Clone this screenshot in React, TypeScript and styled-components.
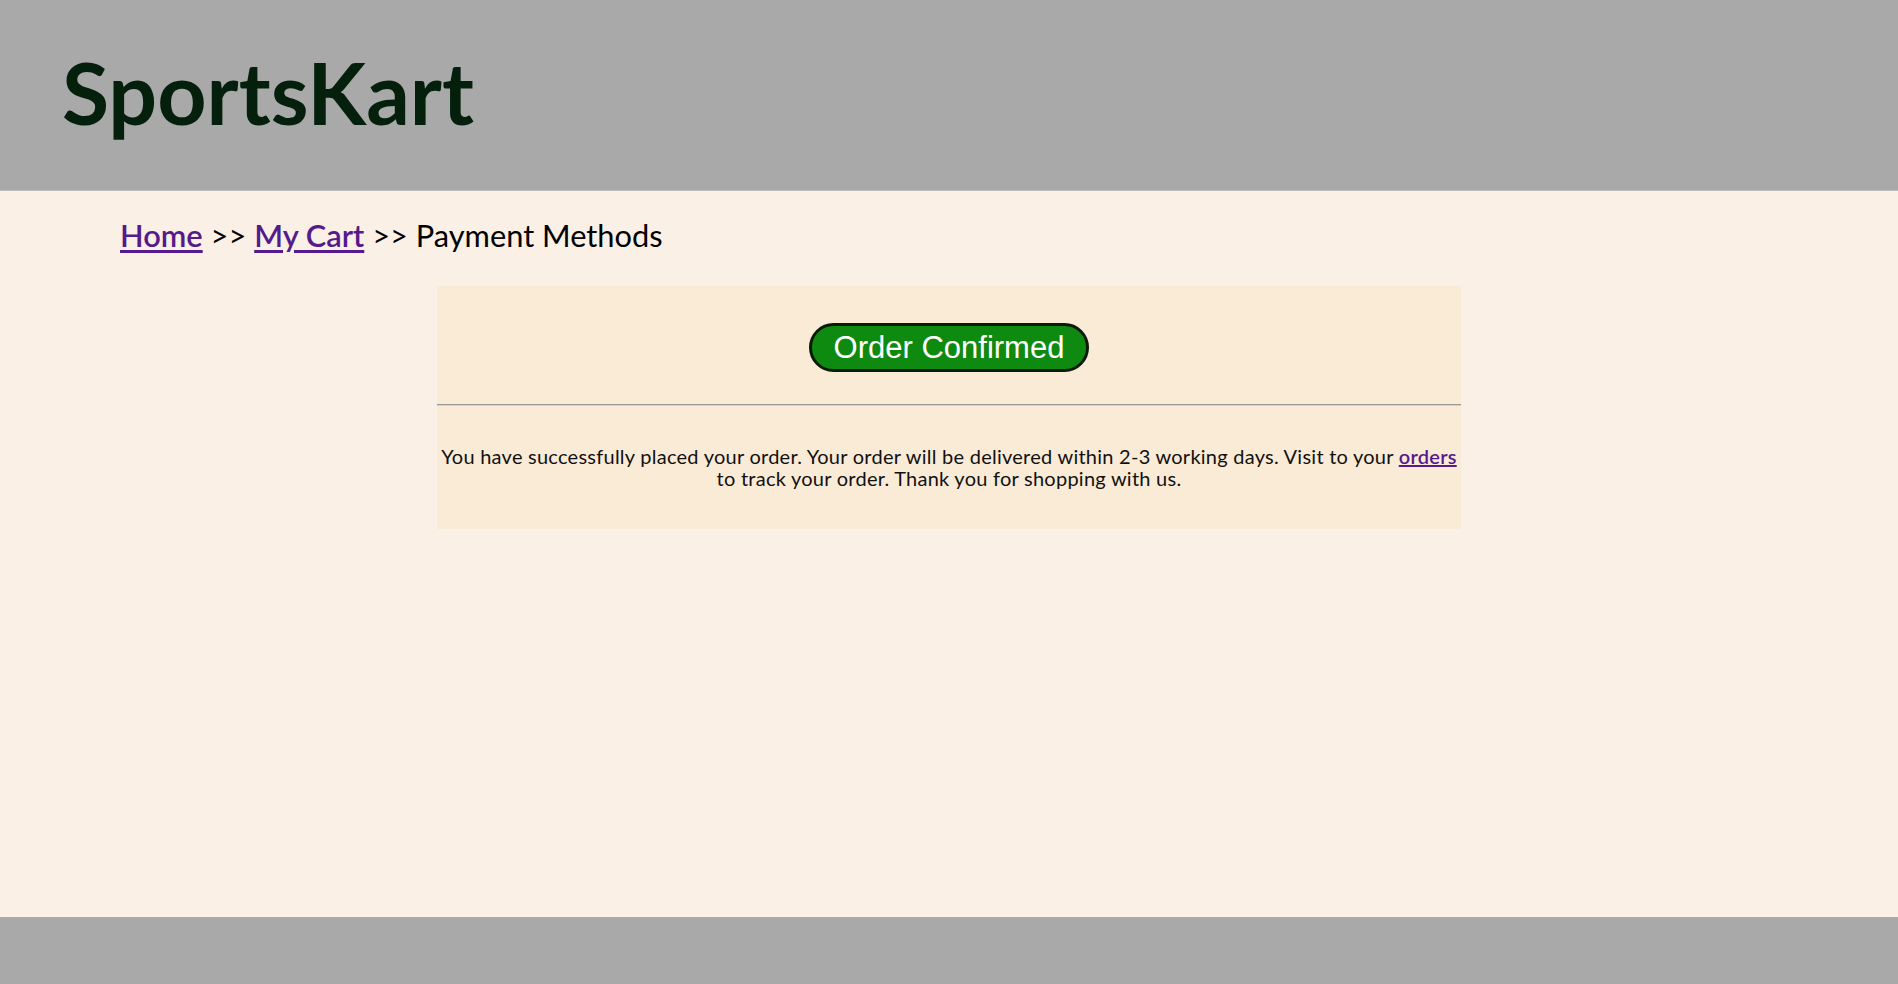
import React from "react";
import styled, { createGlobalStyle } from "styled-components";

const GlobalStyle = createGlobalStyle`
  html, body {
    margin: 0;
    padding: 0;
    background: #faf0e6;
  }
  body {
    font-family: Lato, "Open Sans", sans-serif;
  }
  * { box-sizing: border-box; }
`;

const Page = styled.div`
  display: flex;
  flex-direction: column;
  min-height: 100vh;
`;

const Header = styled.header`
  background: #a9a9a9;
  height: 191px;
  padding: 49px 0 0 62px;
  border-bottom: 1px solid #bdbdbd;
`;

const Brand = styled.h1`
  margin: 0;
  font-family: Lato, sans-serif;
  font-weight: 700;
  font-size: 86px;
  line-height: 86px;
  color: #041f0c;
`;

const Main = styled.main`
  flex: 1;
  background: #faf0e6;
  padding: 27px 0 0 0;
`;

const Crumbs = styled.nav`
  padding-left: 120px;
  font-family: Lato, sans-serif;
  font-size: 30.8px;
  line-height: 36px;
  color: #000;
`;

const CrumbLink = styled.a`
  color: #551a8b;
  text-decoration: underline;
  text-underline-offset: 3px;
  font-weight: 600;
`;

const Card = styled.section`
  width: 54%;
  margin: 32px auto 0;
  background: #faebd7;
  padding: 37px 0 40px;
  display: flex;
  flex-direction: column;
  align-items: center;
`;

const Badge = styled.div`
  height: 49px;
  width: 280px;
  border: 3px solid #0a1a08;
  border-radius: 25px;
  background: #0e8a10;
  color: #fff;
  font-family: "Liberation Sans", Arial, sans-serif;
  font-size: 31px;
  line-height: 43px;
  text-align: center;
`;

const Divider = styled.hr`
  align-self: stretch;
  margin: 32px 0 0;
  border: 0;
  border-top: 1px solid #9a9a9a;
  border-bottom: 1px solid #d8d0c4;
  height: 0;
`;

const Message = styled.p`
  margin: 39px 0 0;
  align-self: stretch;
  text-align: center;
  font-family: Lato, sans-serif;
  font-size: 20px;
  letter-spacing: 0.25px;
  line-height: 22px;
  color: #111;
`;

const InlineLink = styled.a`
  color: #551a8b;
  text-decoration: underline;
  font-weight: 600;
`;

const Footer = styled.footer`
  height: 67px;
  background: #a9a9a9;
`;

export default function App() {
  return (
    <Page>
      <GlobalStyle />
      <Header>
        <Brand>SportsKart</Brand>
      </Header>
      <Main>
        <Crumbs>
          <CrumbLink href="#">Home</CrumbLink> &gt;&gt;{" "}
          <CrumbLink href="#">My Cart</CrumbLink> &gt;&gt; Payment Methods
        </Crumbs>
        <Card>
          <Badge>Order Confirmed</Badge>
          <Divider />
          <Message>
            You have successfully placed your order. Your order will be delivered
            within 2-3 working days. Visit to your{" "}
            <InlineLink href="#">orders</InlineLink> to track your order. Thank you
            for shopping with us.
          </Message>
        </Card>
      </Main>
      <Footer />
    </Page>
  );
}
